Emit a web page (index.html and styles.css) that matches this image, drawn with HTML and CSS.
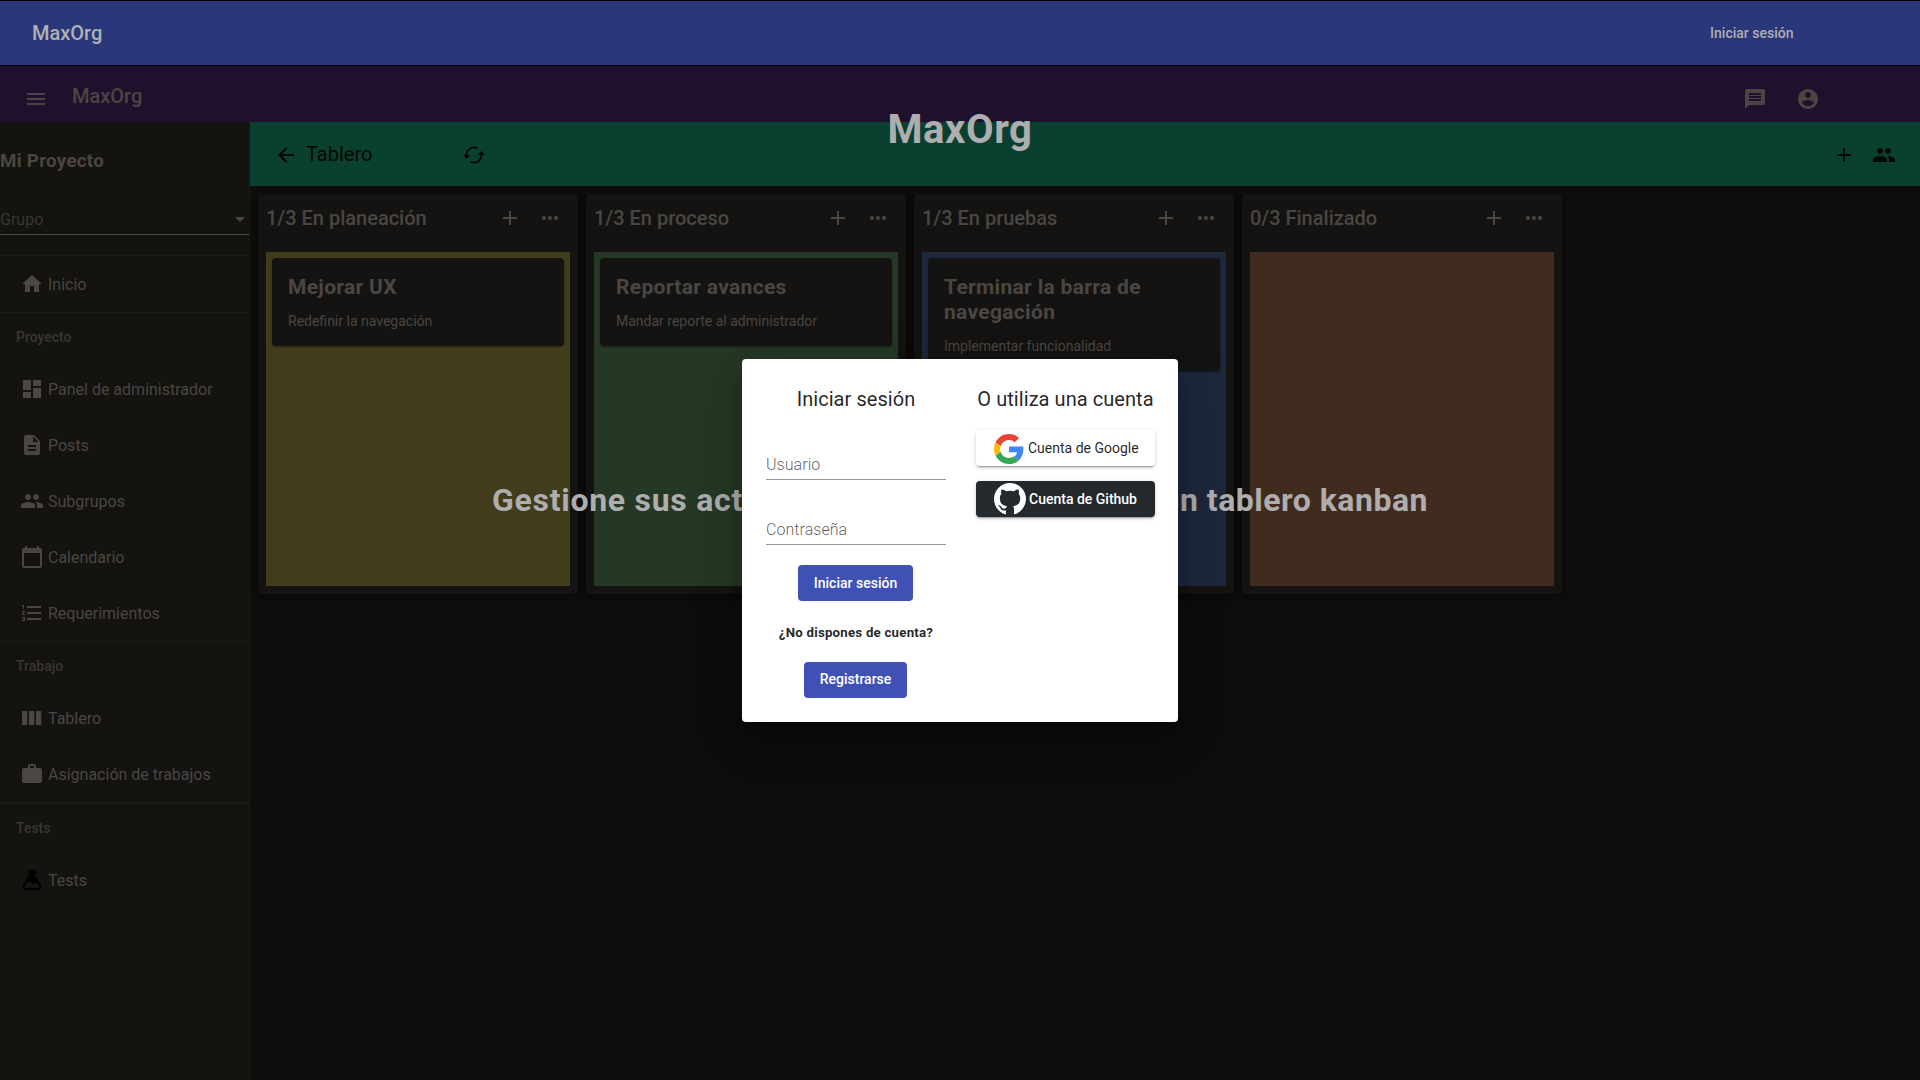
FILE: index.html
```html
<!DOCTYPE html>
<html lang="es">
<head>
<meta charset="utf-8">
<title>MaxOrg</title>
<link rel="stylesheet" href="styles.css">
</head>
<body>
<svg class="defs" aria-hidden="true">
  <symbol id="add" viewBox="0 0 24 24"><path d="M19 13h-6v6h-2v-6H5v-2h6V5h2v6h6v2z"/></symbol>
  <symbol id="more" viewBox="0 0 24 24"><path d="M6 10c-1.1 0-2 .9-2 2s.9 2 2 2 2-.9 2-2-.9-2-2-2zm12 0c-1.1 0-2 .9-2 2s.9 2 2 2 2-.9 2-2-.9-2-2-2zm-6 0c-1.1 0-2 .9-2 2s.9 2 2 2 2-.9 2-2-.9-2-2-2z"/></symbol>
  <symbol id="group" viewBox="0 0 24 24"><path d="M16 11c1.66 0 2.99-1.34 2.99-3S17.66 5 16 5c-1.66 0-3 1.34-3 3s1.34 3 3 3zm-8 0c1.66 0 2.99-1.34 2.99-3S9.66 5 8 5C6.34 5 5 6.34 5 8s1.34 3 3 3zm0 2c-2.33 0-7 1.17-7 3.5V19h14v-2.5c0-2.33-4.67-3.5-7-3.5zm8 0c-.29 0-.62.02-.97.05 1.16.84 1.97 1.97 1.97 3.45V19h6v-2.5c0-2.33-4.67-3.5-7-3.5z"/></symbol>
</svg>

<header class="topbar">
  <span class="brand">MaxOrg</span>
  <a class="login-link">Iniciar sesión</a>
</header>

<main class="hero">
  <div class="app">
    <div class="app-bar">
      <svg class="icon menu" viewBox="0 0 24 24"><path d="M3 18h18v-2H3v2zm0-5h18v-2H3v2zm0-7v2h18V6H3z"/></svg>
      <span class="app-name">MaxOrg</span>
      <svg class="icon" viewBox="0 0 24 24"><path d="M20 2H4c-1.1 0-1.99.9-1.99 2L2 22l4-4h14c1.1 0 2-.9 2-2V4c0-1.1-.9-2-2-2zm-2 12H6v-2h12v2zm0-3H6V9h12v2zm0-3H6V6h12v2z"/></svg>
      <svg class="icon" viewBox="0 0 24 24"><path d="M12 2C6.48 2 2 6.48 2 12s4.480 10 10 10 10-4.480 10-10S17.520 2 12 2zm0 3c1.660 0 3 1.340 3 3s-1.340 3-3 3-3-1.340-3-3 1.340-3 3-3zm0 14.200c-2.500 0-4.710-1.280-6-3.220.030-1.990 4-3.080 6-3.080 1.990 0 5.970 1.090 6 3.080-1.290 1.940-3.500 3.220-6 3.220z"/></svg>
    </div>
    <div class="workspace">
      <nav class="sidebar">
        <h3 class="project">Mi Proyecto</h3>
        <div class="select"><span>Grupo</span><i class="caret"></i></div>
        <ul class="nav-group">
          <li><svg class="icon" viewBox="0 0 24 24"><path d="M10 20v-6h4v6h5v-8h3L12 3 2 12h3v8z"/></svg>Inicio</li>
        </ul>
        <h4>Proyecto</h4>
        <ul>
          <li><svg class="icon" viewBox="0 0 24 24"><path d="M3 13h8V3H3v10zm0 8h8v-6H3v6zm10 0h8V11h-8v10zm0-18v6h8V3h-8z"/></svg>Panel de administrador</li>
          <li><svg class="icon" viewBox="0 0 24 24"><path d="M14 2H6c-1.100 0-1.990.9-1.990 2L4 20c0 1.100.890 2 1.990 2H18c1.100 0 2-.9 2-2V8l-6-6zm2 16H8v-2h8v2zm0-4H8v-2h8v2zm-3-5V3.500L18.500 9H13z"/></svg>Posts</li>
          <li><svg class="icon"><use href="#group"/></svg>Subgrupos</li>
          <li><svg class="icon" viewBox="0 0 24 24"><path d="M20 3h-1V1h-2v2H7V1H5v2H4c-1.100 0-2 .9-2 2v16c0 1.100.9 2 2 2h16c1.100 0 2-.9 2-2V5c0-1.100-.9-2-2-2zm0 18H4V8h16v13z"/></svg>Calendario</li>
          <li><svg class="icon" viewBox="0 0 24 24"><path d="M2 17h2v.5H3v1h1v.5H2v1h3v-4H2v1zm1-9h1V4H2v1h1v3zm-1 3h1.800L2 13.100v.9h3v-1H3.200L5 10.900V10H2v1zm5-6v2h14V5H7zm0 14h14v-2H7v2zm0-6h14v-2H7v2z"/></svg>Requerimientos</li>
        </ul>
        <h4 class="ruled">Trabajo</h4>
        <ul>
          <li><svg class="icon" viewBox="0 0 24 24"><path d="M2 5h5.300v14H2zM9 5h5.300v14H9zM16 5h5.300v14H16z"/></svg>Tablero</li>
          <li><svg class="icon" viewBox="0 0 24 24"><path d="M20 6h-4V4c0-1.110-.890-2-2-2h-4c-1.110 0-2 .890-2 2v2H4c-1.110 0-2 .890-2 2v11c0 1.110.890 2 2 2h16c1.110 0 2-.890 2-2V8c0-1.110-.890-2-2-2zm-6 0h-4V4h4v2z"/></svg>Asignación de trabajos</li>
        </ul>
        <h4 class="ruled thick">Tests</h4>
        <ul>
          <li><svg class="icon flask" viewBox="0 0 24 24"><path d="M9.500 8L4 17.500q-1.500 3.500 1.500 3.500h13q3 0 1.500-3.500L14.500 8" fill="none" stroke="#000" stroke-width="1.800"/><path d="M8.500 2h7v4h-1v3l4 6-2.500-.5-2.500 2.500-2.500-3.500-3 .5L9.500 9V6h-1z"/></svg>Tests</li>
        </ul>
      </nav>

      <section class="board">
        <div class="board-bar">
          <svg class="icon" viewBox="0 0 24 24"><path d="M20 11H7.830l5.590-5.590L12 4l-8 8 8 8 1.410-1.410L7.830 13H20v-2z"/></svg>
          <span class="board-title">Tablero</span>
          <svg class="icon sync" viewBox="0 0 24 24"><path class="arc" d="M4.600 13A7.500 7.500 0 0 1 15.500 5.300M19.400 11A7.500 7.500 0 0 1 8.500 18.700"/><path d="M1.200 12h7l-3.500 4zM15.800 12h7l-3.500-4z"/></svg>
          <svg class="icon push"><use href="#add"/></svg>
          <svg class="icon"><use href="#group"/></svg>
        </div>
        <div class="columns">
          <article class="column">
            <header><h2>1/3 En planeación</h2><svg class="icon"><use href="#add"/></svg><svg class="icon"><use href="#more"/></svg></header>
            <div class="lane yellow"><div class="card"><h3>Mejorar UX</h3><p>Redefinir la navegación</p></div></div>
          </article>
          <article class="column">
            <header><h2>1/3 En proceso</h2><svg class="icon"><use href="#add"/></svg><svg class="icon"><use href="#more"/></svg></header>
            <div class="lane green"><div class="card"><h3>Reportar avances</h3><p>Mandar reporte al administrador</p></div></div>
          </article>
          <article class="column">
            <header><h2>1/3 En pruebas</h2><svg class="icon"><use href="#add"/></svg><svg class="icon"><use href="#more"/></svg></header>
            <div class="lane blue"><div class="card"><h3>Terminar la barra de navegación</h3><p>Implementar funcionalidad</p></div></div>
          </article>
          <article class="column">
            <header><h2>0/3 Finalizado</h2><svg class="icon"><use href="#add"/></svg><svg class="icon"><use href="#more"/></svg></header>
            <div class="lane brown"></div>
          </article>
        </div>
      </section>
    </div>
  </div>

  <div class="hero-text">
    <h1>MaxOrg</h1>
    <p class="tagline"><span class="lead">Gestione sus actividades</span> <span>un tablero kanban</span></p>
  </div>
</main>

<div class="overlay">
  <div class="dialog">
    <form class="login">
      <h2>Iniciar sesión</h2>
      <label class="field">Usuario</label>
      <label class="field second">Contraseña</label>
      <button type="button" class="btn primary">Iniciar sesión</button>
      <p class="question">¿No dispones de cuenta?</p>
      <button type="button" class="btn primary register">Registrarse</button>
    </form>
    <div class="social">
      <h2>O utiliza una cuenta</h2>
      <button type="button" class="btn google">
        <svg width="30" height="30" viewBox="0 0 48 48"><path fill="#EA4335" d="M24 9.500c3.540 0 6.710 1.220 9.210 3.600l6.850-6.850C35.900 2.380 30.470 0 24 0 14.620 0 6.510 5.380 2.560 13.220l7.980 6.190C12.430 13.720 17.740 9.500 24 9.500z"/><path fill="#4285F4" d="M46.980 24.550c0-1.570-.15-3.090-.38-4.550H24v9.020h12.940c-.58 2.960-2.260 5.480-4.780 7.180l7.730 6c4.510-4.180 7.090-10.360 7.090-17.650z"/><path fill="#FBBC05" d="M10.530 28.590c-.48-1.450-.76-2.990-.76-4.590s.27-3.140.76-4.590l-7.980-6.190C.92 16.460 0 20.120 0 24c0 3.880.92 7.540 2.560 10.780l7.970-6.190z"/><path fill="#34A853" d="M24 48c6.480 0 11.930-2.130 15.890-5.810l-7.730-6c-2.150 1.450-4.920 2.300-8.160 2.300-6.260 0-11.570-4.220-13.470-9.910l-7.980 6.190C6.510 42.620 14.620 48 24 48z"/></svg>
        <span>Cuenta de Google</span>
      </button>
      <button type="button" class="btn github">
        <svg width="32" height="32" viewBox="0 0 16 16"><path fill="#fff" fill-rule="evenodd" d="M8 0C3.580 0 0 3.580 0 8c0 3.540 2.290 6.530 5.470 7.590.4.070.55-.17.55-.38 0-.19-.01-.82-.01-1.490-2.010.37-2.530-.49-2.690-.94-.09-.23-.48-.94-.82-1.130-.28-.15-.68-.52-.01-.53.63-.01 1.080.58 1.230.82.72 1.210 1.870.87 2.330.66.07-.52.28-.87.51-1.070-1.780-.2-3.640-.89-3.640-3.950 0-.87.31-1.590.82-2.150-.08-.2-.36-1.020.08-2.120 0 0 .67-.21 2.200.82.64-.18 1.320-.27 2-.27s1.360.09 2 .27c1.530-1.040 2.200-.82 2.200-.82.44 1.100.16 1.920.08 2.120.51.56.82 1.270.82 2.150 0 3.070-1.870 3.750-3.650 3.950.29.25.54.73.54 1.480 0 1.070-.01 1.930-.01 2.200 0 .21.15.46.55.38A8.010 8.010 0 0 0 16 8c0-4.420-3.580-8-8-8z"/></svg>
        <span>Cuenta de Github</span>
      </button>
    </div>
  </div>
</div>
</body>
</html>
```
FILE: styles.css
```css
* { box-sizing: border-box; }
body {
  margin: 0;
  height: 1080px;
  overflow: hidden;
  display: flex;
  flex-direction: column;
  background: #0e0d0b;
  color: #4b4642;
  font-family: Roboto, "Liberation Sans", sans-serif;
}
h1, h2, h3, h4, p, ul { margin: 0; padding: 0; }
ul { list-style: none; }
.defs { display: none; }
.icon { width: 24px; height: 24px; fill: currentColor; flex: none; }

.topbar {
  height: 66px;
  flex: none;
  display: flex;
  align-items: center;
  justify-content: space-between;
  padding: 0 126.500px 0 32px;
  background: #2a377b;
  border: solid #000;
  border-width: 1px 0;
  color: #b0b0b0;
}
.brand { font-size: 20px; font-weight: 500; }
.login-link { font-size: 14px; font-weight: 500; }

.hero { flex: 1; position: relative; display: flex; }
.app { flex: 1; display: flex; flex-direction: column; }
.app-bar {
  height: 56px;
  display: flex;
  align-items: center;
  gap: 29px;
  padding: 10px 100px 0 24px;
  background: #1f112d;
}
.app-bar .menu { margin-right: -5px; }
.app-name { flex: 1; font-size: 20px; font-weight: 500; padding-bottom: 7px; }
.workspace { flex: 1; display: flex; }

.sidebar {
  width: 250px;
  flex: none;
  background: #141310;
  border-right: 1px solid #1b1a18;
  font-size: 16px;
}
.project { font-size: 18.720px; line-height: 22px; padding-top: 28px; letter-spacing: .3px; }
.select {
  height: 63px;
  display: flex;
  align-items: flex-end;
  justify-content: space-between;
  padding: 0 4px 5px 0;
  border-bottom: 1px solid #4b4743;
  color: #393633;
}
.caret { border: 5px solid transparent; border-top-color: #4b4642; border-bottom: 0; margin-bottom: 7px; }
.nav-group { margin-top: 20px; border: solid #1b1a18; border-width: 1px 0; }
.sidebar li { height: 56px; display: flex; align-items: center; gap: 4px; padding-left: 20px; }
.sidebar h4 { height: 48px; line-height: 48px; padding-left: 16px; font-size: 14px; font-weight: 500; color: #393633; }
.sidebar h4.ruled { height: 49px; border-top: 1px solid #1b1a18; }
.sidebar h4.thick { height: 50px; border-top-width: 2px; }
.flask { fill: #000; }

.board { flex: 1; }
.board-bar {
  height: 64px;
  display: flex;
  align-items: center;
  padding: 2px 24px 0;
  background: #0a4030;
  color: #020605;
}
.board-title { width: 164px; padding: 0 0 3px 8px; font-size: 20px; font-weight: 400; }
.sync .arc { fill: none; stroke: currentColor; stroke-width: 1.800; }
.board-bar .push { margin: 0 16px 0 auto; }

.columns { display: flex; gap: 8px; padding: 8px; }
.column {
  width: 320px;
  height: 400px;
  display: flex;
  flex-direction: column;
  padding: 0 8px 8px;
  background: #141311;
  border-radius: 4px;
  box-shadow: 0 2px 6px 2px rgba(0, 0, 0, .3);
}
.column header { height: 58px; display: flex; gap: 16px; padding: 12px 8px 0 0; }
.column h2 { flex: 1; font-size: 20px; line-height: 24px; font-weight: 500; }
.lane { flex: 1; padding: 6px; }
.yellow { background: #403c1c; }
.green { background: #253825; }
.blue { background: #1d283c; }
.brown { background: #412b1e; }
.card { padding: 17px 16px 15px; background: #141311; border-radius: 4px; box-shadow: 0 1px 2px rgba(0, 0, 0, .4); }
.card h3 { font-size: 21px; line-height: 25px; font-weight: 700; letter-spacing: .32px; }
.card p { margin-top: 11px; font-size: 14px; line-height: 20px; }

.hero-text { position: absolute; inset: 0; color: #aeaeae; display: flex; flex-direction: column; align-items: center; }
.hero-text h1 { margin-top: 40px; font-size: 40px; line-height: 47px; font-weight: 700; letter-spacing: .6px; }
.tagline { width: 936px; margin-top: 328px; display: flex; justify-content: space-between; font-size: 32px; line-height: 38px; font-weight: 700; letter-spacing: .5px; }
.tagline .lead { letter-spacing: .72px; }

.overlay { position: absolute; inset: 0; display: flex; align-items: center; justify-content: center; padding-top: 1px; }
.dialog {
  width: 436px;
  height: 363px;
  display: flex;
  justify-content: space-between;
  padding: 24px 23px 24px 24px;
  background: #fff;
  color: rgba(0, 0, 0, .87);
  border-radius: 4px;
  box-shadow: 0 11px 15px -7px rgba(0, 0, 0, .2), 0 24px 38px 3px rgba(0, 0, 0, .14), 0 9px 46px 8px rgba(0, 0, 0, .12);
}
.dialog h2 { font-size: 20px; line-height: 32px; font-weight: 400; letter-spacing: .06px; white-space: nowrap; }
.login { width: 180px; display: flex; flex-direction: column; align-items: center; }
.field { align-self: stretch; height: 24px; margin-top: 41px; line-height: 18px; font-size: 16px; font-weight: 300; letter-spacing: .05px; color: rgba(0, 0, 0, .65); border-bottom: 1px solid #949494; }
.btn { border: 0; border-radius: 4px; height: 36px; flex: none; padding: 0 16px; font: 500 14px/36px Roboto, sans-serif; display: flex; align-items: center; white-space: nowrap; }
.primary { background: #3f51b5; color: #fff; margin-right: 1px; }
.register { padding-bottom: 2px; line-height: 34px; }
.field.second + .btn { margin-top: 20px; }
.question { margin: 24px 0 21px; font-size: 13.280px; line-height: 16px; font-weight: 700; letter-spacing: .22px; }
.social { width: 179px; display: flex; flex-direction: column; align-items: center; }
.social .btn { align-self: stretch; padding-left: 18px; box-shadow: 0 3px 1px -2px rgba(0, 0, 0, .2), 0 2px 2px 0 rgba(0, 0, 0, .14), 0 1px 5px 0 rgba(0, 0, 0, .12); }
.google { margin-top: 15px; gap: 4px; background: #fff; color: rgba(0, 0, 0, .87); }
.google span { font-weight: 400; }
.google svg { margin-top: 2px; }
.github { margin-top: 15px; gap: 3px; background: #24292e; color: #fff; }
```
